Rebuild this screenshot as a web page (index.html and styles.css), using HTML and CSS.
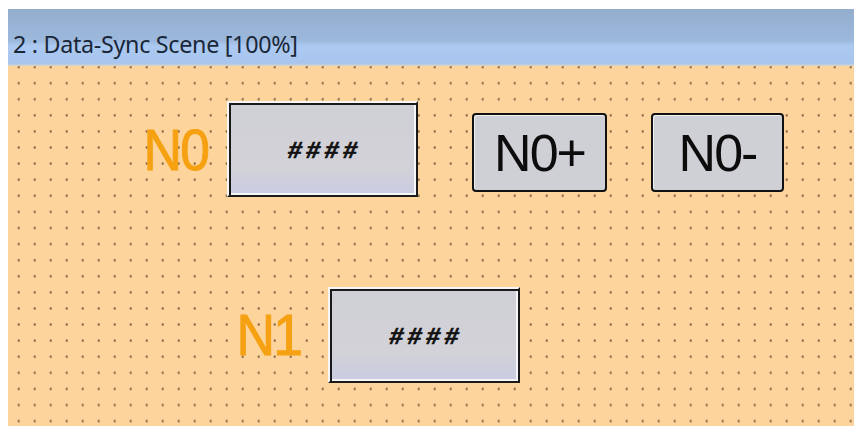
FILE: index.html
```html
<!DOCTYPE html>
<html lang="en">
<head>
  <meta charset="UTF-8">
  <meta name="viewport" content="width=device-width, initial-scale=1.0">
  <title>Data-Sync Scene</title>
  <link rel="stylesheet" href="styles.css">
</head>
<body>
  <div class="window">
    <!-- Scene window caption -->
    <div class="titlebar">2 : Data-Sync Scene [100%]</div>

    <!-- Design canvas: widgets sit where they were placed in the editor -->
    <div class="scene">
      <span class="tag tag-n0">N0</span>
      <div class="numbox numbox-n0"><span>####</span></div>
      <div class="btn btn-inc">N0+</div>
      <div class="btn btn-dec">N0-</div>

      <span class="tag tag-n1">N1</span>
      <div class="numbox numbox-n1"><span>####</span></div>
    </div>
  </div>
</body>
</html>
```

FILE: styles.css
```css
/* General */
html, body {
  margin: 0;
  padding: 0;
  background: #fff;
  overflow: hidden;
}

.window {
  margin: 9px 0 0 8px;
  display: flex;
  flex-direction: column;
}

/* Caption bar */
.titlebar {
  height: 57px;
  box-sizing: border-box;
  padding: 21px 0 0 5px;
  font-family: "Noto Sans", "Open Sans", sans-serif;
  font-size: 23.3px;
  line-height: 28px;
  letter-spacing: -0.3px;
  color: #1a2738;
  background: linear-gradient(to bottom, #93aecd 0%, #9cb8dc 55%, #acc9f1 65%, #a7c5ee 95%, #d9d6c8 100%);
}

/* Scene canvas with the snap grid */
.scene {
  position: relative;
  height: 360px;
  background-color: #fdd49c;
  background-image: radial-gradient(circle, #7f6443 0.9px, transparent 1.4px);
  background-size: 16px 16.1px;
  background-position: 2.7px -7px;
}

/* Orange text labels (narrow face) */
.tag {
  position: absolute;
  font-family: "Liberation Sans", Arial, sans-serif;
  font-size: 58px;
  line-height: 58px;
  letter-spacing: -2px;
  color: #f6a112;
  -webkit-text-stroke: 1px #f6a112;
  transform: scaleX(0.92);
  transform-origin: right center;
}

.tag-n0 { left: 130px; top: 55px; }
.tag-n1 { left: 223px; top: 240px; }

/* Numeric display boxes */
.numbox {
  position: absolute;
  box-sizing: border-box;
  width: 191px;
  height: 96px;
  display: flex;
  align-items: center;
  justify-content: center;
  padding: 4px 0 0 4px;
  background: linear-gradient(to bottom, #cfcfd6 0%, #d2d2d8 70%, #c9cbe2 100%);
  border: 2px solid;
  border-color: #f6f6f6 #1a1a1a #1a1a1a #f6f6f6;
  box-shadow: inset 2px 2px 0 #1a1a1a, inset -2px -2px 0 #f6f6f6;
  font-family: "Liberation Mono", "Courier New", monospace;
  font-weight: bold;
  font-style: italic;
  font-size: 24px;
  letter-spacing: 4px;
  color: #111;
  -webkit-text-stroke: 0.7px #111;
}

.numbox-n0 { left: 219px; top: 35px; }
.numbox-n1 { left: 320px; top: 221px; width: 192px; }

/* Push buttons */
.btn {
  position: absolute;
  top: 47px;
  box-sizing: border-box;
  height: 79px;
  display: flex;
  align-items: center;
  justify-content: center;
  background: #cfcfd6;
  border: 2px solid #111;
  border-radius: 4px;
  box-shadow: inset 1px 1px 0 #f2f2f2;
  font-family: "Liberation Sans", Arial, sans-serif;
  font-size: 52px;
  letter-spacing: -2px;
  color: #0c0c0c;
}

.btn-inc { left: 464px; width: 135px; }
.btn-dec { left: 643px; width: 133px; }
```
